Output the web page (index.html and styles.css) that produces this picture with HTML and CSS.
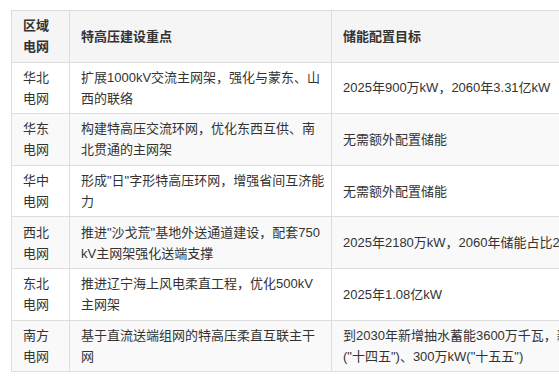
FILE: index.html
```html
<!DOCTYPE html>
<html lang="zh-CN">
<head>
<meta charset="utf-8">
<title>各区域电网特高压建设与储能配置</title>
<link rel="stylesheet" href="styles.css">
</head>
<body>
<div class="wrap">
  <table class="grid">
    <colgroup>
      <col class="c-region">
      <col class="c-focus">
      <col class="c-target">
    </colgroup>
    <thead>
      <tr>
        <th>区域电网</th>
        <th>特高压建设重点</th>
        <th>储能配置目标</th>
      </tr>
    </thead>
    <tbody>
      <tr>
        <td>华北电网</td>
        <td>扩展1000kV交流主网架，强化与蒙东、山西的联络</td>
        <td>2025年900万kW，2060年3.31亿kW</td>
      </tr>
      <tr>
        <td>华东电网</td>
        <td>构建特高压交流环网，优化东西互供、南北贯通的主网架</td>
        <td>无需额外配置储能</td>
      </tr>
      <tr>
        <td>华中电网</td>
        <td>形成"日"字形特高压环网，增强省间互济能力</td>
        <td>无需额外配置储能</td>
      </tr>
      <tr>
        <td>西北电网</td>
        <td>推进"沙戈荒"基地外送通道建设，配套750kV主网架强化送端支撑</td>
        <td>2025年2180万kW，2060年储能占比20%</td>
      </tr>
      <tr>
        <td>东北电网</td>
        <td>推进辽宁海上风电柔直工程，优化500kV主网架</td>
        <td>2025年1.08亿kW</td>
      </tr>
      <tr>
        <td>南方电网</td>
        <td>基于直流送端组网的特高压柔直互联主干网</td>
        <td>到2030年新增抽水蓄能3600万千瓦，新型储能500万千瓦("十四五")、300万kW("十五五")</td>
      </tr>
    </tbody>
  </table>
</div>
</body>
</html>
```
FILE: styles.css
```css
html, body {
  margin: 0;
  padding: 0;
  background: #ffffff;
  overflow: hidden;
}
.wrap {
  padding: 10px 0 0 11px;
  overflow: hidden;
}
.grid {
  border-collapse: collapse;
  table-layout: fixed;
  width: 675px;
  font-family: "Liberation Sans", "Noto Sans CJK SC", sans-serif;
  font-size: 13px;
  line-height: 21px;
  color: #333333;
}
.c-region { width: 58px; }
.c-focus { width: 262px; }
.c-target { width: 355px; }
.grid th,
.grid td {
  border: 1px solid #dddddd;
  padding: 4.3px 6px 4.3px 11px;
  text-align: left;
  vertical-align: middle;
  word-break: break-all;
}
.grid th:first-child,
.grid td:first-child {
  padding-right: 11px;
}
.grid th {
  background: #f5f5f5;
  font-weight: bold;
}
.grid tbody tr:nth-child(even) td {
  background: #f9f9f9;
}
```
